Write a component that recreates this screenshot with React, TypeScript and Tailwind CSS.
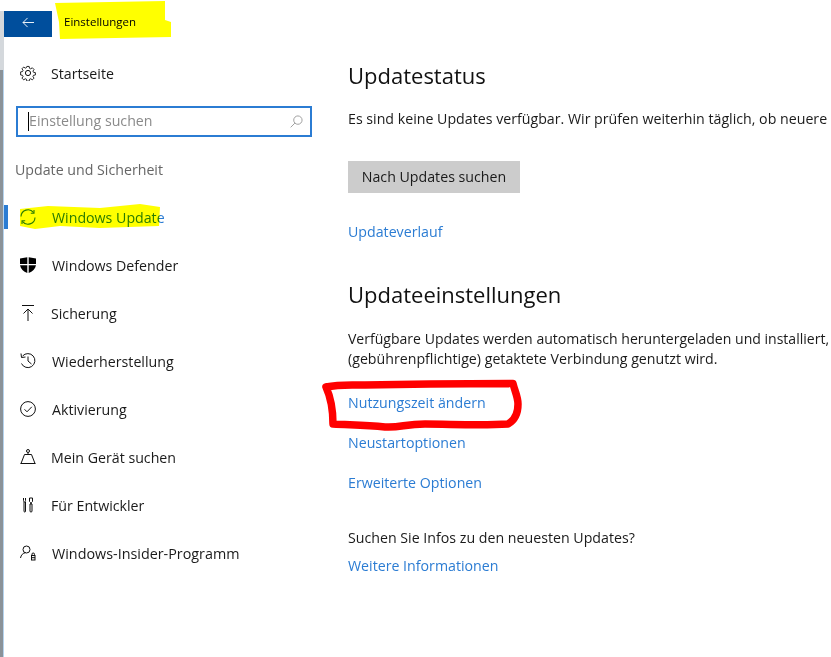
import React from 'react';

const Gear = () => (
  <svg viewBox="0 0 16 16" className="w-4 h-4" fill="none" stroke="#111" strokeWidth="1">
    <circle cx="8" cy="8" r="2.6" />
    <path d="M6.7.7h2.6l.4 2.1 1.3.6 1.8-1.2 1.9 1.9-1.2 1.8.6 1.3 2.1.4v2.6l-2.1.4-.6 1.3 1.2 1.8-1.9 1.9-1.8-1.2-1.3.6-.4 2.1H6.7l-.4-2.1-1.3-.6-1.8 1.2-1.9-1.9 1.2-1.8-.6-1.3-2.1-.4V6.8l2.1-.4.6-1.3-1.2-1.8 1.9-1.9 1.8 1.2 1.3-.6z" transform="translate(.8 .8) scale(.9)" />
  </svg>
);

const Sync = () => (
  <svg viewBox="0 0 16 16" className="w-4 h-4" fill="none" stroke="#2b7cd3" strokeWidth="1.1">
    <path d="M1 7.5A7 7 0 0 1 13.6 3.6" />
    <path d="M14 1v3.2h-3.2" />
    <path d="M15 8.5A7 7 0 0 1 2.4 12.4" />
    <path d="M2 15v-3.2h3.2" />
  </svg>
);

const Shield = () => (
  <svg viewBox="0 0 16 16" className="w-4 h-4" fill="#000">
    <path d="M0 1.5 7.3.2V7H0zM8.700.2 16 1.500V7H8.700zM0 8.300h7.300V16C3.500 14.500.6 12 0 8.300zM8.700 8.300H16c-.6 3.700-3.500 6.200-7.300 7.700z" />
  </svg>
);

const Backup = () => (
  <svg viewBox="0 0 16 16" className="w-4 h-4" fill="none" stroke="#111" strokeWidth="1">
    <path d="M2 .5h12M8 16V4M3.500 8.500 8 4l4.500 4.500" />
  </svg>
);

const History = () => (
  <svg viewBox="0 0 16 16" className="w-4 h-4" fill="none" stroke="#111" strokeWidth="1">
    <path d="M2.600 3A7 7 0 1 1 1.500 10.500" />
    <path d="M1 .5 1.500 4.500 5.500 4" />
    <path d="M8 3.500V8l3.500 3" />
  </svg>
);

const Check = () => (
  <svg viewBox="0 0 16 16" className="w-4 h-4" fill="none" stroke="#111" strokeWidth="1">
    <circle cx="8" cy="8" r="7.400" />
    <path d="m4.500 8.300 2.500 2.500 4.800-5" />
  </svg>
);

const Find = () => (
  <svg viewBox="0 0 16 16" className="w-4 h-4" fill="none" stroke="#111" strokeWidth="1">
    <circle cx="8" cy="2" r="1.500" />
    <path d="M8 3.500V5.500M4.500 5.500h7M4.500 5.500 1 14.500M11.500 5.500l3.500 9M.5 14.500h15" />
  </svg>
);

const Dev = () => (
  <svg viewBox="0 0 16 16" className="w-4 h-4" fill="none" stroke="#111" strokeWidth="1">
    <path d="M3.500 1v2.500c0 1 .4 1.500 1 1.500s1-.5 1-1.500V1M4 5v9c0 1.500 1.500 1.500 1.500 0V5" />
    <path d="M9.500 1h3v3.500l-1 1v1h-1v-1l-1-1zM10 7h2v7c0 1.500-2 1.500-2 0z" />
  </svg>
);

const Insider = () => (
  <svg viewBox="0 0 16 16" className="w-4 h-4" fill="none" stroke="#111" strokeWidth="1">
    <circle cx="6.500" cy="4.500" r="3.500" />
    <path d="M.5 13c.5-3 2.500-5 5-5.300" />
    <rect x="11.500" y="10.500" width="3.500" height="4.500" />
    <circle cx="13.200" cy="9.300" r="1.300" />
    <path d="M11.500 12.700h3.500" />
  </svg>
);

const items = [
  { label: 'Windows Defender', icon: <Shield />, cls: 'ml-[1px]' },
  { label: 'Sicherung', icon: <Backup />, cls: '' },
  { label: 'Wiederherstellung', icon: <History />, cls: 'ml-[1px]' },
  { label: 'Aktivierung', icon: <Check />, cls: 'ml-[1px]' },
  { label: 'Mein Gerät suchen', icon: <Find />, cls: '' },
  { label: 'Für Entwickler', icon: <Dev />, cls: '' },
  { label: 'Windows-Insider-Programm', icon: <Insider />, cls: 'ml-[1px] text-[14.35px]' },
];

export default function App() {
  return (
    <div className="relative flex w-[831px] h-[657px] overflow-hidden bg-white font-['Open_Sans',sans-serif] text-[14.2px] leading-[20px] text-[#1a1a1a]">
      {/* window edge behind the screenshot */}
      <div className="flex flex-col w-[4px] shrink-0">
        <div className="h-[11px] bg-white" />
        <div className="h-[59px] bg-[#d4d8dc]" />
        <div className="flex-1 bg-[#8a9299] border-r border-[#b5d3ee]" />
      </div>

      {/* sidebar */}
      <div className="w-[344px] shrink-0 flex flex-col">
        <div className="flex items-center h-[26px] mt-[11px]">
          <div className="w-[48px] h-[26px] bg-[#004e9c] flex items-center justify-center">
            <svg viewBox="0 0 14 12" className="w-[13px] h-[11px] -mt-[4px]" fill="none" stroke="#fff" strokeWidth="1">
              <path d="M13 6H1M6 1 1 6l5 5" />
            </svg>
          </div>
          <span className="ml-[12px] text-[11.500px] text-black -mt-[4px]">Einstellungen</span>
        </div>

        <div className="flex items-center h-[48px] mt-[12px] pl-[16px]">
          <span className="w-[31px] flex"><Gear /></span>
          <span className="pt-[2px]">Startseite</span>
        </div>

        <div className="ml-[12px] w-[296px] h-[31px] mt-[9px] border-2 border-[#2b7cd3] flex items-center pl-[10px] pr-[7px] text-[#8a8a8a]">
          <span className="w-px h-[19px] bg-black" />
          <span className="flex-1 pb-[1px]">Einstellung suchen</span>
          <svg viewBox="0 0 14 14" className="w-[13px] h-[13px]" fill="none" stroke="#999" strokeWidth="1">
            <circle cx="8.500" cy="5.500" r="4.500" />
            <path d="M5.300 8.700 .7 13.300" />
          </svg>
        </div>

        <div className="ml-[11px] mt-[23px] h-[20px] text-[#666]">Update und Sicherheit</div>

        <div className="flex items-center h-[48px] mt-[13px]">
          <span className="w-[4px] h-[24px] bg-[#2b7cd3] mr-[12px]" />
          <span className="w-[31px] flex"><Sync /></span>
          <span className="pt-[2px] ml-[1px] text-[#2b7cd3]">Windows Update</span>
        </div>

        {items.map((item) => (
          <div key={item.label} className="flex items-center h-[48px] pl-[16px]">
            <span className="w-[31px] flex">{item.icon}</span>
            <span className={`pt-[2px] ${item.cls}`}>{item.label}</span>
          </div>
        ))}
      </div>

      {/* content */}
      <div className="flex-1 min-w-0 whitespace-nowrap overflow-hidden">
        <h1 className="mt-[59px] h-[32px] leading-[32px] text-[22px] text-[#111]">Updatestatus</h1>
        <p className="mt-[18px] h-[20px]">Es sind keine Updates verfügbar. Wir prüfen weiterhin täglich, ob neuere</p>
        <div className="mt-[32px] w-[172px] h-[32px] bg-[#cccccc] flex items-center justify-center">Nach Updates suchen</div>
        <a className="block mt-[29px] h-[20px] text-[#2b7cd3]">Updateverlauf</a>
        <h2 className="mt-[36px] h-[32px] leading-[32px] text-[22px] text-[#111]">Updateeinstellungen</h2>
        <p className="mt-[19px] h-[20px] text-[14.05px]">Verfügbare Updates werden automatisch heruntergeladen und installiert,</p>
        <p className="h-[20px]">(gebührenpflichtige) getaktete Verbindung genutzt wird.</p>
        <a className="block mt-[24px] h-[20px] text-[#2b7cd3]">Nutzungszeit ändern</a>
        <a className="block mt-[20px] h-[20px] text-[#2b7cd3]">Neustartoptionen</a>
        <a className="block mt-[20px] h-[20px] text-[#2b7cd3]">Erweiterte Optionen</a>
        <p className="mt-[35px] h-[20px]">Suchen Sie Infos zu den neuesten Updates?</p>
        <a className="block mt-[8px] h-[20px] text-[#2b7cd3]">Weitere Informationen</a>
      </div>

      {/* hand-drawn marker annotations on top of the screenshot */}
      <svg viewBox="0 0 831 657" className="absolute inset-0 w-[831px] h-[657px] pointer-events-none mix-blend-multiply">
        <path d="M55 3 165 1 165 20 171 22 171 37 60 39 59 22z" fill="#ffff00" />
        <path d="M20 209 48 206 100 208 140 204 160 207 159 226 100 228 60 226 35 229 20 226z" fill="#ffff00" />
      </svg>
      <svg viewBox="0 0 831 657" className="absolute inset-0 w-[831px] h-[657px] pointer-events-none">
        <path
          d="M326 387 C 340 384 350 385 365 385 L 430 384 L 513 383.500 C 515 392 518 397 518 404 C 518 413 515 420 508 424 C 480 426 450 424 425 424 C 405 424 400 428 385 427 C 365 425 350 425 333 424 C 333 412 331 398 326 387"
          fill="none"
          stroke="#ff0000"
          strokeWidth="7.500"
          strokeLinecap="round"
          strokeLinejoin="round"
        />
      </svg>
    </div>
  );
}
